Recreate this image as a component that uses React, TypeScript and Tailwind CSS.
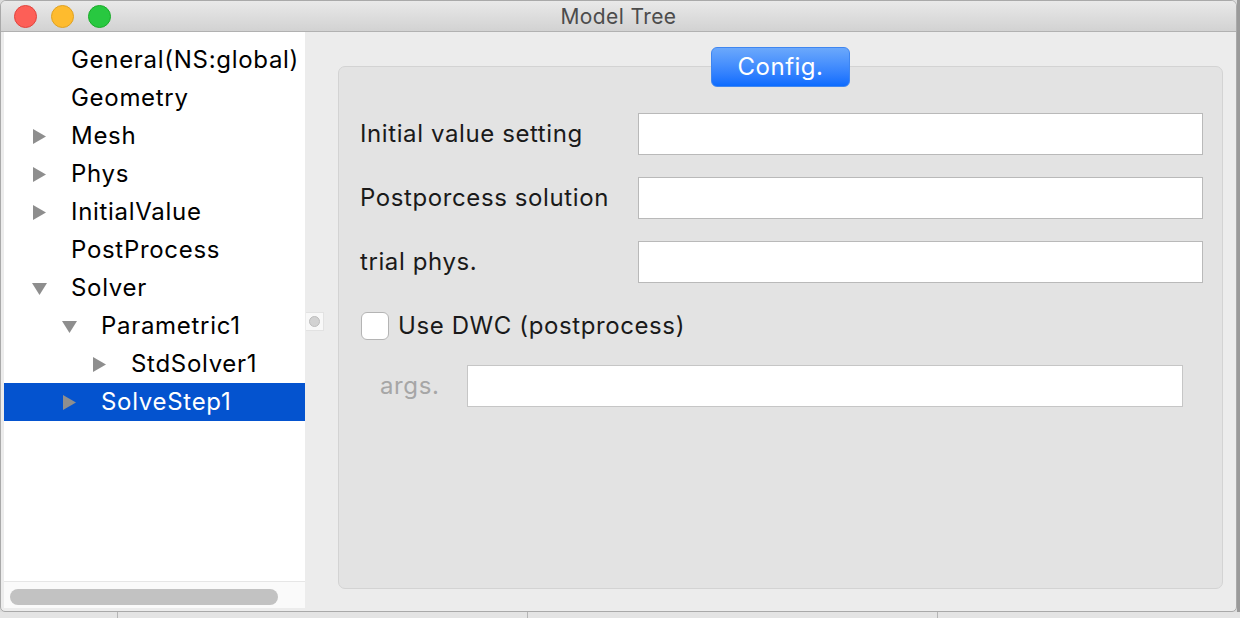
import React from 'react'

type Node = { label: string; level: number; arrow?: 'right' | 'down'; selected?: boolean }

const tree: Node[] = [
  { label: 'General(NS:global)', level: 0 },
  { label: 'Geometry', level: 0 },
  { label: 'Mesh', level: 0, arrow: 'right' },
  { label: 'Phys', level: 0, arrow: 'right' },
  { label: 'InitialValue', level: 0, arrow: 'right' },
  { label: 'PostProcess', level: 0 },
  { label: 'Solver', level: 0, arrow: 'down' },
  { label: 'Parametric1', level: 1, arrow: 'down' },
  { label: 'StdSolver1', level: 2, arrow: 'right' },
  { label: 'SolveStep1', level: 1, arrow: 'right', selected: true },
]

const indent = ['pl-[28px]', 'pl-[58px]', 'pl-[88px]']

function Arrow({ dir }: { dir?: 'right' | 'down' }) {
  if (!dir) return <span className="w-[39px] shrink-0" />
  return (
    <span className="w-[39px] shrink-0 flex items-center">
      {dir === 'right' ? (
        <svg width="14" height="15" viewBox="0 0 14 15">
          <polygon points="1,0 14,7.5 1,15" fill="#8e8e8e" />
        </svg>
      ) : (
        <svg width="15" height="14" viewBox="0 0 15 14">
          <polygon points="0,2 15,2 7.5,14" fill="#8e8e8e" />
        </svg>
      )}
    </span>
  )
}

function Field({ className = '' }: { className?: string }) {
  return <div className={`h-[42px] bg-white border border-[#b9b9b9] ${className}`} />
}

export default function App() {
  const font = { fontFamily: 'Inter, "Liberation Sans", sans-serif' }
  return (
    <div className="w-[1240px] h-[618px] bg-[#dcdcdc] flex flex-col overflow-hidden" style={font}>
      <div className="flex flex-1 min-h-0">
        <div className="w-[1237px] h-[612px] shrink-0 bg-[#ececec] rounded-t-[6px] rounded-b-[5px] border border-[#a9a9a9] flex flex-col overflow-hidden">
          {/* title bar */}
          <div className="h-[31px] shrink-0 bg-gradient-to-b from-[#e9e9e9] to-[#d2d2d2] border-b border-[#b1b1b1] flex items-center relative">
            <div className="flex items-center gap-[14px] pl-[13px]">
              <span className="w-[23px] h-[23px] rounded-full bg-[#fd5f57] border border-[#e0443e]" />
              <span className="w-[23px] h-[23px] rounded-full bg-[#febb2e] border border-[#dea123]" />
              <span className="w-[23px] h-[23px] rounded-full bg-[#28c840] border border-[#1aab29]" />
            </div>
            <div className="flex-1 text-center text-[21px] tracking-[0.4px] text-[#4c4c4c] pr-[110px] pt-[1px]">Model Tree</div>
          </div>

          <div className="flex flex-1 min-h-0">
            {/* tree */}
            <div className="w-[301px] shrink-0 ml-[3px] mb-[3px] flex flex-col bg-white overflow-hidden">
              <div className="flex-1 pt-[9px]">
                {tree.map((n) => (
                  <div
                    key={n.label}
                    className={`h-[38px] flex items-center text-[24px] tracking-[0.7px] ${indent[n.level]} ${
                      n.selected ? 'bg-[#0453cf] text-white' : 'text-black'
                    }`}
                  >
                    <Arrow dir={n.arrow} />
                    <span className="whitespace-nowrap">{n.label}</span>
                  </div>
                ))}
              </div>
              <div className="h-[27px] shrink-0 bg-[#fafafa] border-t border-[#e6e6e6] px-[6px] pt-[7px]">
                <div className="w-[268px] h-[16px] rounded-full bg-[#c2c2c2]" />
              </div>
            </div>

            {/* splitter */}
            <div className="w-[33px] shrink-0 flex items-center">
              <div className="w-[18px] h-[19px] ml-[1px] bg-[#f8f8f8] border-y border-r border-[#e2e2e2] flex items-center justify-center">
                <span className="w-[11px] h-[11px] rounded-full bg-[#d2d2d2] border border-[#bdbdbd]" />
              </div>
            </div>

            {/* config panel */}
            <div className="w-[885px] shrink-0 flex flex-col items-center pt-[15px] pb-[22px]">
              <button className="relative z-10 w-[139px] h-[40px] rounded-[6px] bg-gradient-to-b from-[#6ba8fb] to-[#0a6bfe] border border-[#3f86f0] text-white text-[24px] tracking-[0.5px] leading-none">
                Config.
              </button>
              <div className="-mt-[21px] w-full flex-1 bg-[#e3e3e3] border border-[#d3d3d3] rounded-[7px] pt-[46px] pl-[21px] pr-[19px]">
                <div className="grid grid-cols-[278px_1fr] gap-y-[22px] items-center text-[24px] tracking-[0.6px] text-[#1a1a1a]">
                  <span className="whitespace-nowrap">Initial value setting</span>
                  <Field />
                  <span className="whitespace-nowrap">Postporcess solution</span>
                  <Field />
                  <span className="whitespace-nowrap">trial phys.</span>
                  <Field />
                </div>
                <div className="flex items-center h-[28px] mt-[29px] ml-[1px] text-[24px] tracking-[0.6px] text-[#1a1a1a]">
                  <span className="w-[28px] h-[28px] rounded-[6px] bg-white border border-[#b4b4b4] mr-[9px]" />
                  <span>Use DWC (postprocess)</span>
                </div>
                <div className="flex items-center mt-[25px] pl-[20px] pr-[20px] text-[24px] tracking-[0.6px]">
                  <span className="w-[87px] shrink-0 text-[#a6a6a6]">args.</span>
                  <Field className="flex-1 border-[#c6c6c6]" />
                </div>
              </div>
            </div>
          </div>
        </div>
        <div className="flex-1 bg-[#9a9a9a]" />
      </div>
      <div className="h-[6px] shrink-0 flex bg-[#e4e4e4]">
        <div className="w-[118px] border-r border-[#b5b5b5]" />
        <div className="w-[410px] border-r border-[#b5b5b5]" />
        <div className="w-[410px] border-r border-[#b5b5b5]" />
        <div className="flex-1" />
      </div>
    </div>
  )
}
